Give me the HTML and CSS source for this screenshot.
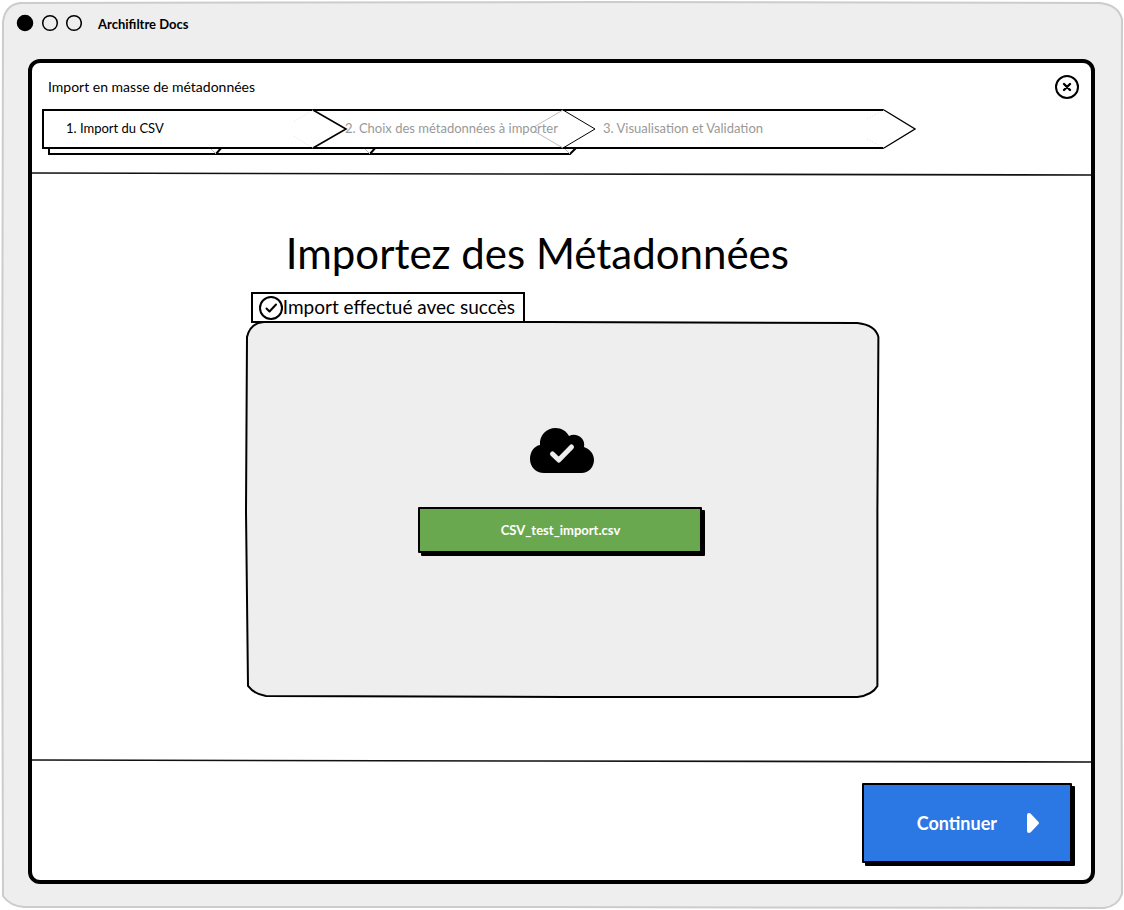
FILE: index.html
```
<!DOCTYPE html>
<html lang="fr">
<head>
<meta charset="utf-8">
<meta name="viewport" content="width=device-width, initial-scale=1">
<title>Archifiltre Docs</title>
<link rel="stylesheet" href="styles.css">
</head>
<body>
<div class="window">
  <svg class="window-shape" viewBox="0 0 1120 907" preserveAspectRatio="none" aria-hidden="true">
    <path d="M18 1 L600 0 L1098 1 Q1116 3 1120 17 L1119 450 L1120 892 Q1116 904 1102 906 L550 905 L22 905 Q8 904 1 894 L0 500 L1 20 Q3 3 18 1 Z"/>
  </svg>
  <header class="titlebar">
    <svg class="dots" width="66" height="18" viewBox="0 0 66 18" aria-hidden="true">
      <circle cx="9" cy="9" r="7.500" fill="#000"/>
      <circle cx="34" cy="9" r="7.3"/>
      <circle cx="58" cy="9" r="7.3"/>
    </svg>
    <span class="app-name">Archifiltre Docs</span>
  </header>

  <section class="panel">
    <div class="panel-head">
      <div class="head-row">
        <h2 class="panel-title">Import en masse de métadonnées</h2>
        <button class="close" type="button" aria-label="Fermer">
          <svg width="26" height="26" viewBox="0 0 26 26" aria-hidden="true">
            <circle cx="13" cy="13" r="11" stroke-width="2"/>
            <path d="M10 10 L16 16 M16 10 L10 16" stroke-width="2.4"/>
          </svg>
        </button>
      </div>
      <nav class="stepper" aria-label="Étapes">
        <svg class="stepper-shape" viewBox="0 0 876 50" preserveAspectRatio="none" aria-hidden="true">
          <path class="thick" d="M7 40 V47 H174 L180 40 M174 47 H328 L334 40 M328 47 H528 L535 40"/>
          <path class="faint" d="M169 42 L174 47 M323 42 L328 47 M522 41 L528 47"/>
          <path class="box" d="M1 3 H842 L873 22 L842 41 H1 Z"/>
          <path class="thick" d="M842 3 H1 V41 H842"/>
          <path class="slim" d="M842 3 L873 22 L842 41"/>
          <path class="bold" d="M271 3 L304 22 L271 41"/>
          <path class="hair" d="M521 3 L553 22 L521 41"/>
          <path class="dotted" d="M271 3 L251 15 M271 41 L251 29 M842 3 L825 12 M842 41 L825 32"/>
          <path class="faint" d="M521 3 L492 20 M521 41 L492 24"/>
        </svg>
        <ol class="steps">
          <li class="step current">1. Import du CSV</li>
          <li class="step">2. Choix des métadonnées à importer</li>
          <li class="step">3. Visualisation et Validation</li>
        </ol>
      </nav>
    </div>
    <svg class="rule" viewBox="0 0 1060 4" preserveAspectRatio="none" aria-hidden="true"><path d="M0 1 L500 2 L1060 3"/></svg>

    <main class="content">
      <h1 class="title">Importez des Métadonnées</h1>
      <div class="status" role="status">
        <svg class="status-icon" width="24" height="24" viewBox="0 0 24 24" aria-hidden="true">
          <circle cx="12" cy="12" r="11"/>
          <path d="M7.5 12.5 L10.5 15.5 L17 8.5"/>
        </svg>
        <span>Import effectué avec succès</span>
      </div>
      <div class="dropzone">
        <svg class="dropzone-shape" viewBox="0 0 634 376" preserveAspectRatio="none" aria-hidden="true">
          <path d="M18 1 L300 1 L612 2 Q630 4 633 16 L632 190 L632 364 Q627 373 612 375 L320 375 L20 374 Q8 372 2 364 L0 190 L1 16 Q4 2 18 1 Z"/>
        </svg>
        <svg class="cloud" width="64" height="45" viewBox="0 0 64 45" aria-hidden="true">
          <path d="M14 45 C6 45 0 39 0 31 C0 24 4 18 10 17 C9 7 17 0 25.500 0 C31.500 0 36.500 3 39 8 C46 4 56 10 54 19 C60 21 64 26 64 32 C64 39 58.500 45 51.500 45 Z"/>
          <path class="tick" d="M22.500 26 L28.800 32 L41.500 19"/>
        </svg>
        <button class="sketch-btn file" type="button">CSV_test_import.csv</button>
      </div>
    </main>

    <svg class="rule" viewBox="0 0 1060 4" preserveAspectRatio="none" aria-hidden="true"><path d="M0 1 L500 2 L1060 3"/></svg>
    <footer class="panel-foot">
      <button class="sketch-btn next" type="button">
        <span>Continuer</span>
        <svg width="12" height="20" viewBox="0 0 12 20" aria-hidden="true"><path d="M0 2 Q0 0 2 0 Q3 0 4 1 L11.500 9 Q12.500 10 11.500 11 L4 19 Q3 20 2 20 Q0 20 0 18 Z" fill="#fff"/></svg>
      </button>
    </footer>
  </section>
</div>
</body>
</html>
```

FILE: styles.css
```
* { box-sizing: border-box; }

body {
  margin: 0;
  min-height: 100vh;
  padding: 2px 2px 1px;
  display: flex;
  background: #fff;
  color: #000;
  font-family: Lato, "Open Sans", sans-serif;
  font-size: 13px;
  line-height: 16px;
}

button { font: inherit; cursor: pointer; }

h1, h2, ol { margin: 0; padding: 0; font-weight: 400; }

svg path, svg circle { vector-effect: non-scaling-stroke; }

.window {
  position: relative;
  flex: 1;
  display: flex;
  flex-direction: column;
  padding: 12px 27px 25px 26px;
}

.window-shape,
.stepper-shape,
.dropzone-shape {
  position: absolute;
  inset: 0;
  width: 100%;
  height: 100%;
  overflow: visible;
}

.window-shape path { fill: #eee; stroke: #ccc; stroke-width: 2; }

.titlebar {
  position: relative;
  display: flex;
  align-items: center;
  gap: 16px;
  height: 45px;
  margin-left: -12px;
  padding-bottom: 27px;
}

.dots { fill: none; stroke: #000; stroke-width: 1.5; }

.app-name { font-weight: 700; padding-top: 2px; }

.panel {
  position: relative;
  flex: 1;
  display: flex;
  flex-direction: column;
  border: 4px solid #000;
  border-radius: 12px;
  background: #fff;
}

.panel-head { padding: 11px 11px 15px 10px; }

.head-row {
  display: flex;
  align-items: center;
  justify-content: space-between;
  padding-left: 6px;
}

.panel-title { font-size: 14px; }

.close {
  display: flex;
  padding: 0;
  border: 0;
  background: none;
}

.close svg { fill: none; stroke: #000; stroke-linecap: round; }

.stepper {
  position: relative;
  max-width: 876px;
  height: 50px;
  margin-top: 7px;
}

.stepper-shape { fill: none; stroke: #000; }
.stepper-shape .box { fill: #fff; stroke: none; }
.stepper-shape .thick { stroke-width: 2; }
.stepper-shape .bold { stroke-width: 1.6; }
.stepper-shape .slim { stroke-width: 1.4; }
.stepper-shape .hair { stroke-width: 1; }
.stepper-shape .faint { stroke: #bbb; stroke-width: 1; }
.stepper-shape .dotted { stroke: #ddd; stroke-width: 1; stroke-dasharray: 1 2; }

.steps {
  position: relative;
  display: grid;
  grid-template-columns: 279fr 258fr 315fr;
  padding-left: 24px;
  list-style: none;
}

.step { color: #999; line-height: 42px; white-space: nowrap; }
.step.current { color: #000; }

.rule { display: block; width: 100%; height: 4px; }
.rule path { fill: none; stroke: #111; stroke-width: 1.6; }

.content {
  flex: 1;
  width: 60%;
  min-width: 634px;
  margin: 0 auto;
  padding: 49px 0 61px 2px;
  display: flex;
  flex-direction: column;
  align-items: flex-start;
}

.title {
  font-size: 42px;
  line-height: 56px;
  padding-left: 40px;
  white-space: nowrap;
}

.status {
  position: relative;
  z-index: 1;
  display: flex;
  align-items: center;
  height: 31px;
  margin: 11px 0 -2px 5px;
  padding: 0 8px 0 6px;
  border: 2px solid #000;
  background: #fff;
  font-size: 19px;
  line-height: 24px;
  white-space: nowrap;
}

.status span { padding-bottom: 2px; }

.status-icon { fill: none; stroke: #000; stroke-width: 2; stroke-linecap: round; stroke-linejoin: round; }

.dropzone {
  position: relative;
  flex: 1;
  align-self: stretch;
  display: flex;
  flex-direction: column;
  align-items: center;
  justify-content: center;
  gap: 34px;
  padding-bottom: 38px;
}

.dropzone-shape path { fill: #eee; stroke: #000; stroke-width: 2; }

.cloud { position: relative; }
.cloud .tick { fill: none; stroke: #eee; stroke-width: 5; stroke-linecap: round; stroke-linejoin: round; }

.sketch-btn {
  position: relative;
  border: 2px solid #000;
  border-radius: 1px;
  box-shadow: 3px 3px 0 #000;
  color: #fff;
  font-weight: 700;
}

.file {
  width: 284px;
  height: 46px;
  margin-right: 4px;
  background: #6aa84f;
}

.panel-foot {
  display: flex;
  justify-content: flex-end;
  padding: 20px 19px 17px;
}

.next {
  display: flex;
  align-items: center;
  gap: 30px;
  height: 80px;
  padding: 0 31px 0 53px;
  background: #2b78e4;
  font-size: 18px;
  line-height: 24px;
}
```
